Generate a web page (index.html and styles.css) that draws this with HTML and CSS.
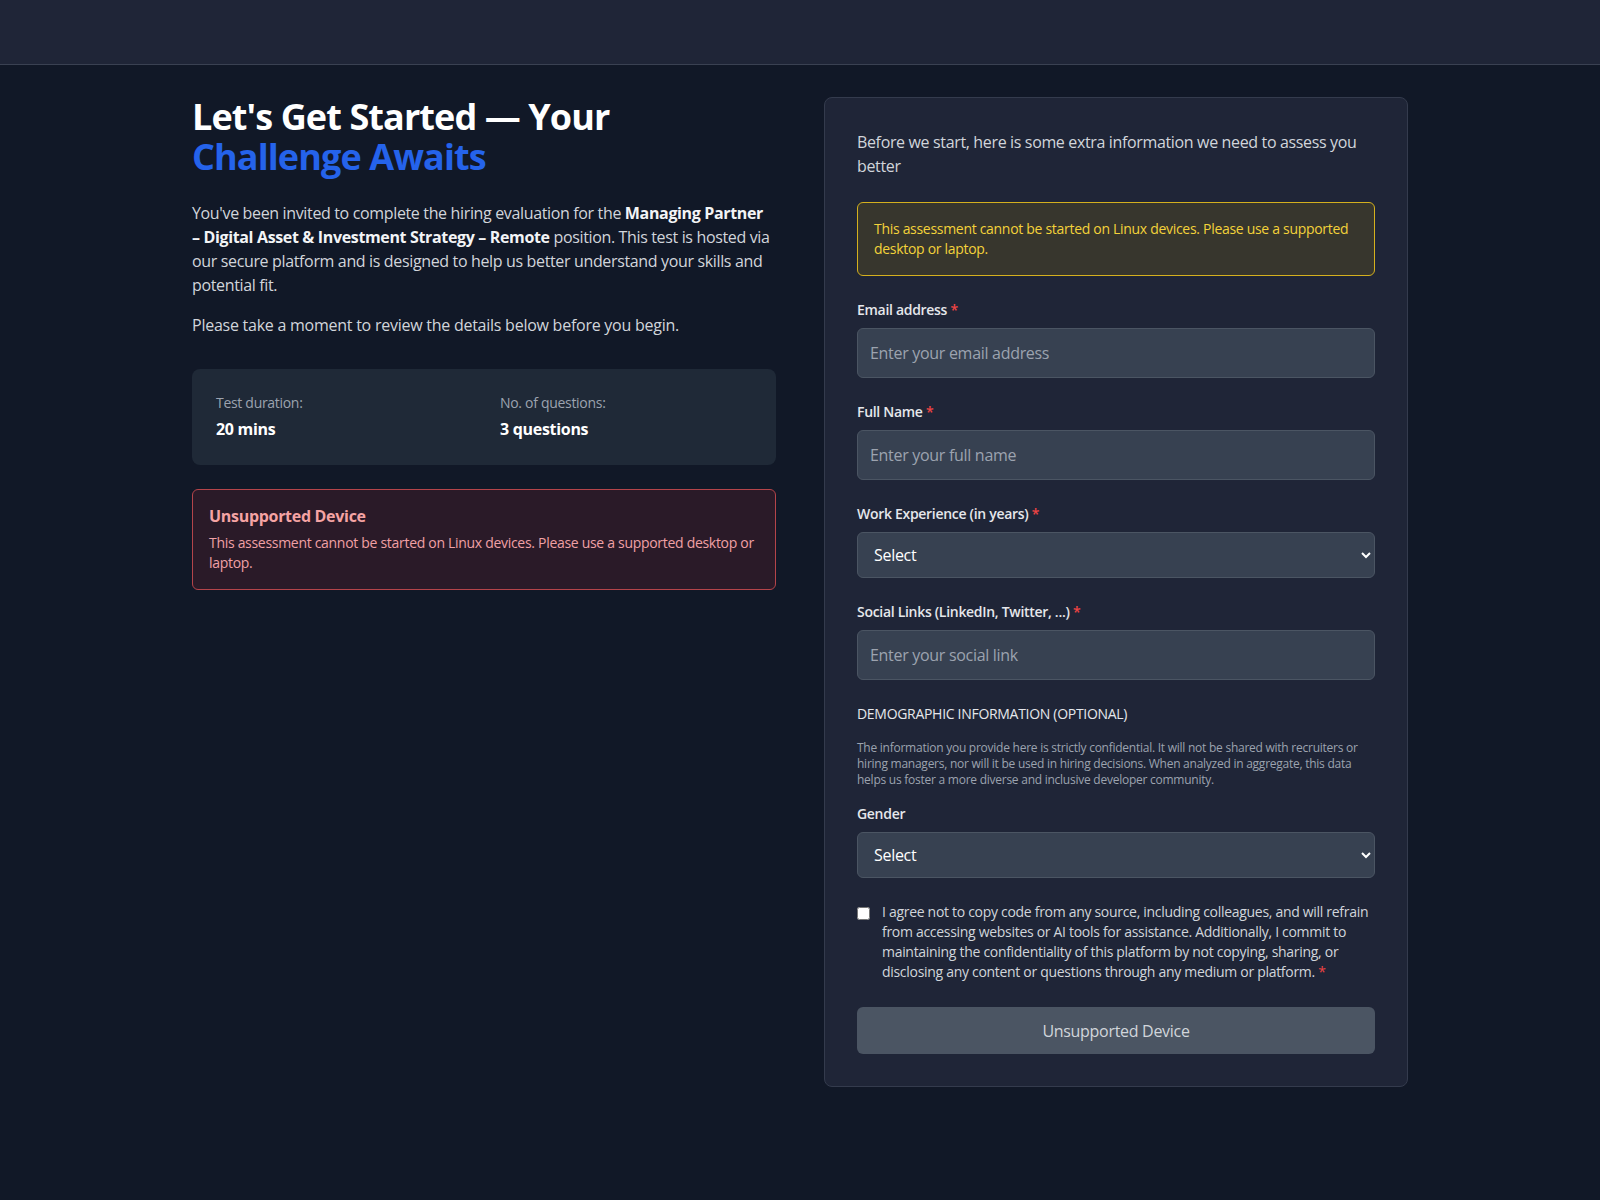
FILE: index.html
```html
<!DOCTYPE html>
<html lang="en">
<head>
<meta charset="utf-8">
<title>Let's Get Started</title>
<link rel="stylesheet" href="styles.css">
</head>
<body>
<header class="topbar"></header>
<main class="container">
  <section class="intro">
    <h1 class="title">Let's Get Started — Your <span class="accent">Challenge Awaits</span></h1>
    <p class="lead">You've been invited to complete the hiring evaluation for the <strong>Managing Partner <span class="nowrap">– Digital</span> Asset &amp; Investment Strategy – Remote</strong> position. This test is hosted via our secure platform and is designed to help us better understand your skills and potential fit.</p>
    <p class="lead lead-2">Please take a moment to review the details below before you begin.</p>
    <div class="stats">
      <div class="stat">
        <div class="stat-label">Test duration:</div>
        <div class="stat-value">20 mins</div>
      </div>
      <div class="stat">
        <div class="stat-label">No. of questions:</div>
        <div class="stat-value">3 questions</div>
      </div>
    </div>
    <div class="alert-error">
      <div class="alert-title">Unsupported Device</div>
      <div class="alert-text">This assessment cannot be started on Linux devices. Please use a supported desktop or laptop.</div>
    </div>
  </section>

  <section class="card">
    <p class="card-intro">Before we start, here is some extra information we need to assess you better</p>
    <div class="alert-warn">This assessment cannot be started on Linux devices. Please use a supported desktop or laptop.</div>
    <form class="form">
      <div class="field">
        <label class="label">Email address <span class="req">*</span></label>
        <input class="input" type="email" placeholder="Enter your email address">
      </div>
      <div class="field">
        <label class="label">Full Name <span class="req">*</span></label>
        <input class="input" type="text" placeholder="Enter your full name">
      </div>
      <div class="field">
        <label class="label">Work Experience (in years) <span class="req">*</span></label>
        <select class="select"><option>Select</option></select>
      </div>
      <div class="field">
        <label class="label">Social Links (LinkedIn, Twitter, ...) <span class="req">*</span></label>
        <input class="input" type="text" placeholder="Enter your social link">
      </div>
      <div class="demo">
        <div class="demo-title">Demographic Information (Optional)</div>
        <p class="demo-text">The information you provide here is strictly confidential. It will not be shared with recruiters or hiring managers, nor will it be used in hiring decisions. When analyzed in aggregate, this data helps us foster a more diverse and inclusive developer community.</p>
        <div class="field">
          <label class="label">Gender</label>
          <select class="select"><option>Select</option></select>
        </div>
      </div>
      <label class="agree">
        <input class="check" type="checkbox">
        <span class="agree-text">I agree not to copy code from any source, including colleagues, and will refrain from accessing websites or AI tools for assistance. Additionally, I commit to maintaining the confidentiality of this platform by not copying, sharing, or disclosing any content or questions through any medium or platform. <span class="req">*</span></span>
      </label>
      <button class="submit" type="button">Unsupported Device</button>
    </form>
  </section>
</main>
</body>
</html>
```

FILE: styles.css
```css
* { box-sizing: border-box; }

html, body {
  margin: 0;
  background: #111827;
}

body {
  font-family: "Open Sans", "Noto Sans", sans-serif;
  color: #d1d5db;
  min-height: 1200px;
}

.topbar {
  height: 65px;
  background: #1f2537;
  border-bottom: 1px solid #3a4152;
}

.container {
  max-width: 1280px;
  margin: 0 auto;
  padding: 32px 32px;
  display: grid;
  grid-template-columns: 1fr 1fr;
  gap: 48px;
  align-items: start;
}

.title {
  margin: 0;
  font-size: 36px;
  line-height: 40px;
  font-weight: 700;
  color: #ffffff;
  letter-spacing: -0.9px;
}

.accent { color: #2563eb; }

.lead {
  margin: 24px 0 0;
  font-size: 16px;
  line-height: 24px;
  color: #d1d5db;
  letter-spacing: -0.35px;
}

.lead strong { color: #f3f4f6; font-weight: 700; }

.nowrap { white-space: nowrap; }

.lead-2 { margin-top: 16px; letter-spacing: -0.25px; }

.stats {
  margin-top: 32px;
  background: #1f2937;
  border-radius: 8px;
  padding: 24px;
  display: grid;
  grid-template-columns: 1fr 1fr;
  gap: 32px;
}

.stat-label {
  font-size: 14px;
  line-height: 20px;
  color: #9ca3af;
  letter-spacing: -0.3px;
}

.stat-value {
  margin-top: 4px;
  font-size: 16px;
  line-height: 24px;
  font-weight: 700;
  color: #ffffff;
  letter-spacing: -0.3px;
}

.alert-error {
  margin-top: 24px;
  border: 1px solid #b4444a;
  background: #2a1a28;
  border-radius: 6px;
  padding: 16px;
}

.alert-title {
  font-size: 16px;
  line-height: 20px;
  font-weight: 700;
  color: #f5a3a3;
  margin-bottom: 7px;
  letter-spacing: -0.3px;
}

.alert-text {
  font-size: 14px;
  line-height: 20px;
  color: #f0a0a5;
  letter-spacing: -0.3px;
}

.card {
  background: #1f2537;
  border: 1px solid #343b4d;
  border-radius: 8px;
  padding: 32px;
}

.card-intro {
  margin: 0;
  font-size: 16px;
  line-height: 24px;
  color: #d1d5db;
  letter-spacing: -0.35px;
}

.alert-warn {
  margin-top: 24px;
  border: 1px solid #d4b01e;
  background: #37362d;
  border-radius: 6px;
  padding: 16px;
  font-size: 14px;
  line-height: 20px;
  color: #f3d23a;
  letter-spacing: -0.3px;
}

.form {
  margin-top: 24px;
  display: flex;
  flex-direction: column;
  gap: 24px;
}

.field {
  display: flex;
  flex-direction: column;
}

.label {
  font-size: 14px;
  line-height: 20px;
  font-weight: 600;
  color: #e5e7eb;
  margin-bottom: 8px;
  letter-spacing: -0.3px;
}

.req { color: #ef4444; }

.input,
.select {
  width: 100%;
  font-family: inherit;
  font-size: 16px;
  line-height: 24px;
  background: #374151;
  border: 1px solid #4b5563;
  border-radius: 6px;
  color: #ffffff;
  outline: none;
  letter-spacing: -0.3px;
}

.input {
  padding: 12px;
  height: 50px;
}

.input::placeholder { color: #9ca3af; }

.select {
  padding: 10px 12px;
  height: 46px;
  color-scheme: dark;
}

.demo-title {
  font-size: 14px;
  line-height: 20px;
  font-weight: 500;
  text-transform: uppercase;
  color: #e5e7eb;
  letter-spacing: -0.3px;
}

.demo-text {
  margin: 16px 0 16px;
  font-size: 12px;
  line-height: 16px;
  color: #9ca3af;
  letter-spacing: -0.25px;
}

.agree {
  display: flex;
  align-items: flex-start;
  gap: 12px;
}

.check {
  margin: 5px 0 0;
  width: 13px;
  height: 13px;
  flex: none;
}

.agree-text {
  font-size: 14px;
  line-height: 20px;
  color: #d1d5db;
  letter-spacing: -0.3px;
}

.submit {
  margin-top: 1px;
  height: 47px;
  border: none;
  border-radius: 6px;
  background: #4b5563;
  color: #d1d5db;
  font-family: inherit;
  font-size: 16px;
  font-weight: 500;
  letter-spacing: -0.3px;
}
```
